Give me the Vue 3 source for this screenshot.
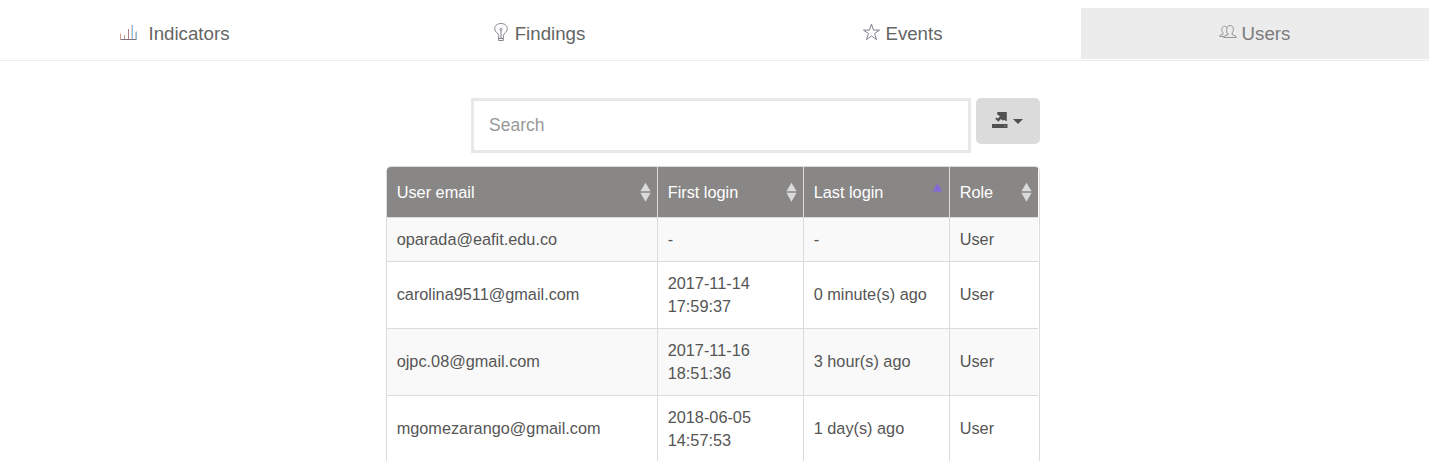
<script setup>
const tabs = [
  { name: 'Indicators', icon: 'bars' },
  { name: 'Findings', icon: 'bulb' },
  { name: 'Events', icon: 'star' },
  { name: 'Users', icon: 'users', active: true }
]
const columns = [
  { label: 'User email', sort: 'both' },
  { label: 'First login', sort: 'both' },
  { label: 'Last login', sort: 'asc' },
  { label: 'Role', sort: 'both' }
]
const rows = [
  ['oparada@eafit.edu.co', '-', '-', 'User'],
  ['carolina9511@gmail.com', '2017-11-14 17:59:37', '0 minute(s) ago', 'User'],
  ['ojpc.08@gmail.com', '2017-11-16 18:51:36', '3 hour(s) ago', 'User'],
  ['mgomezarango@gmail.com', '2018-06-05 14:57:53', '1 day(s) ago', 'User']
]
</script>

<template>
  <div class="page">
    <nav class="tabs">
      <a v-for="t in tabs" :key="t.name" class="tab" :class="[t.icon, { active: t.active }]">
        <svg v-if="t.icon === 'bars'" class="icon" width="18" height="18" viewBox="0 0 18 18">
          <path d="M.5 10.500v6" stroke="#d3a08c" />
          <path d="M4.500 12v4.500" stroke="#b5a29c" />
          <path d="M8.500 6v10.500" stroke="#b08088" />
          <path d="M11.500 2v14.500" stroke="#e3d3cb" />
          <path d="M12.500 2v14.500M16.500 8.500v8" stroke="#86bfec" />
          <path d="M15.500 9v7.500" stroke="#d9c8c0" />
          <path d="M.5 16.500h16" stroke="#84747c" />
        </svg>
        <svg v-else-if="t.icon === 'bulb'" class="icon" width="14" height="20" viewBox="0 0 14 20">
          <path d="M4.700 18.500V13.500C4.200 11 .7 10.200.7 6.700C.7 3.500 3.500 1.500 7 1.500s6.300 2 6.300 5.200c0 3.500-3.500 4.300-4 6.800v5zM4.700 16.500h4.600M7 16.500V8" stroke="#85818f" />
          <circle cx="7" cy="7.300" r="1.100" stroke="#85818f" stroke-width=".9" />
        </svg>
        <svg v-else-if="t.icon === 'star'" class="icon" width="17" height="18" viewBox="0 0 17 18">
          <path d="M8.500 1.200l2 5.900h6l-4.900 3.500 1.900 6-5-3.700-5 3.700 1.900-6L.5 7.100h6z" stroke="#777985" stroke-width=".95" />
        </svg>
        <svg v-else class="icon" width="18" height="16" viewBox="0 0 18 16">
          <path d="M8.400 10.200C7.600 9 7.700 7.500 7.700 5.500C7.700 3 9 1.500 11.100 1.500s3.300 1.500 3.300 4c0 1.600-.5 2.500-1.200 3.400v1.700l3.600 1.500.6 1.400H4.700l.7-1.500 3.600-1.300V9" stroke="#8c8991" stroke-width=".9" />
          <path d="M7.900 3.500C7.400 2.600 6.600 2.200 5.500 2.200C3.600 2.200 2.800 3.500 2.800 5.600c0 1.500.4 2.400 1.200 3.200v1.500L1 11.400.6 12.500h4.200" stroke="#918e97" stroke-width=".9" />
        </svg>
        <span>{{ t.name }}</span>
      </a>
    </nav>

    <main class="content">
      <div class="toolbar">
        <input class="search" type="text" placeholder="Search" />
        <button class="export" aria-label="Export">
          <svg width="16" height="18" viewBox="0 0 16 18">
            <path d="M5.300 1h9.500v9.300l-3-1.500-1 1-2-1.800-2.400 2.700-3.200-2.900 1.500-1.300 1.300.9L8 5.300 5.300 3.600z" fill="#505050" />
            <path d="M0 13h15.500v4H0z" fill="#505050" />
            <path d="M12 14.500h1.500v1H12z" fill="#999" />
          </svg>
          <span class="caret"></span>
        </button>
      </div>

      <div class="table-box">
        <table>
          <colgroup>
            <col class="email" /><col class="date" /><col class="date" /><col class="role" />
          </colgroup>
          <thead>
            <tr>
              <th v-for="c in columns" :key="c.label">
                <div class="heading">
                  <span>{{ c.label }}</span>
                  <svg v-if="c.sort === 'both'" width="12" height="20" viewBox="0 0 12 20">
                    <path d="M5.500 .8L10.600 9.300H.4zM.4 10.700h10.200L5.500 19.800z" fill="#dadada" />
                  </svg>
                  <svg v-else width="12" height="20" viewBox="0 0 12 20">
                    <path d="M5.500 1.200L10.300 9.600H.7z" fill="#8467d8" />
                  </svg>
                </div>
              </th>
            </tr>
          </thead>
          <tbody>
            <tr v-for="r in rows" :key="r[0]">
              <td v-for="(cell, i) in r" :key="i" :class="{ single: i !== 1 }">{{ cell }}</td>
            </tr>
          </tbody>
        </table>
      </div>
    </main>
  </div>
</template>

<style>
body {
  overflow: hidden;
  background: #fff;
}
</style>

<style scoped>
.page {
  box-sizing: border-box;
  width: 1429px;
  height: 461px;
  overflow: hidden;
  padding-top: 8px;
  font-family: "Liberation Sans", Arial, sans-serif;
  color: #555;
}
.tabs {
  display: flex;
  height: 52px;
  border-bottom: 1px solid #ececec;
}
.tab {
  display: flex;
  align-items: center;
  justify-content: center;
  box-sizing: border-box;
  width: 357px;
  height: 51px;
  gap: 4px;
  font-size: 18.7px;
  line-height: 27px;
  color: #656565;
}
.tab.bars {
  gap: 10px;
  padding-right: 7px;
}
.tab.bulb {
  width: 367px;
  gap: 7px;
  padding-right: 2px;
}
.tab.star {
  gap: 5px;
  padding-left: 1px;
}
.tab.active {
  width: 348px;
  gap: 5px;
  padding-right: 1px;
  background: #ececec;
  color: #7b7b7b;
}
.icon {
  flex: none;
  fill: none;
  margin-bottom: 4px;
}
.content {
  width: 654px;
  margin: 37px 0 0 386px;
}
.toolbar {
  display: flex;
  justify-content: flex-end;
  align-items: flex-start;
  gap: 5px;
  height: 68px;
}
.search {
  box-sizing: border-box;
  width: 500px;
  height: 55px;
  border: 3px solid #e8e8e8;
  border-radius: 0;
  padding: 0 15px;
  font: 17.5px "Liberation Sans", Arial, sans-serif;
  background: #fff;
}
.search::placeholder {
  color: #999;
  opacity: 1;
}
.export {
  display: flex;
  align-items: center;
  justify-content: center;
  width: 64px;
  height: 46px;
  gap: 5px;
  padding: 0 1px 2px 0;
  border: 0;
  border-radius: 5px;
  background: #dbdbdb;
}
.caret {
  border: 5px solid transparent;
  border-top-color: #505050;
  border-bottom: 0;
  margin-top: 3px;
}
.table-box {
  box-sizing: border-box;
  width: 654px;
  height: 320px;
  overflow: hidden;
  border: 1px solid #dbdbdb;
  border-radius: 5px;
}
table {
  width: 651px;
  table-layout: fixed;
  border-collapse: separate;
  border-spacing: 0;
  font-size: 16.3px;
  line-height: 23px;
}
.email {
  width: 271px;
}
.date {
  width: 146px;
}
.role {
  width: 88px;
}
th,
td {
  box-sizing: border-box;
  padding: 10px 9px 10px 9.7px;
  border-right: 1px solid #dbdbdb;
  border-bottom: 1px solid #dbdbdb;
  text-align: left;
  vertical-align: middle;
}
td.single {
  padding-top: 9.6px;
  padding-bottom: 10.4px;
}
th:last-child,
td:last-child {
  border-right: 0;
}
th {
  height: 51px;
  padding: 0 5px 0 9.7px;
  background: #898686;
  color: #fff;
  font-weight: 400;
}
.heading {
  display: flex;
  align-items: center;
  justify-content: space-between;
}
tbody tr:nth-child(odd) {
  background: #f9f9f9;
}
</style>
